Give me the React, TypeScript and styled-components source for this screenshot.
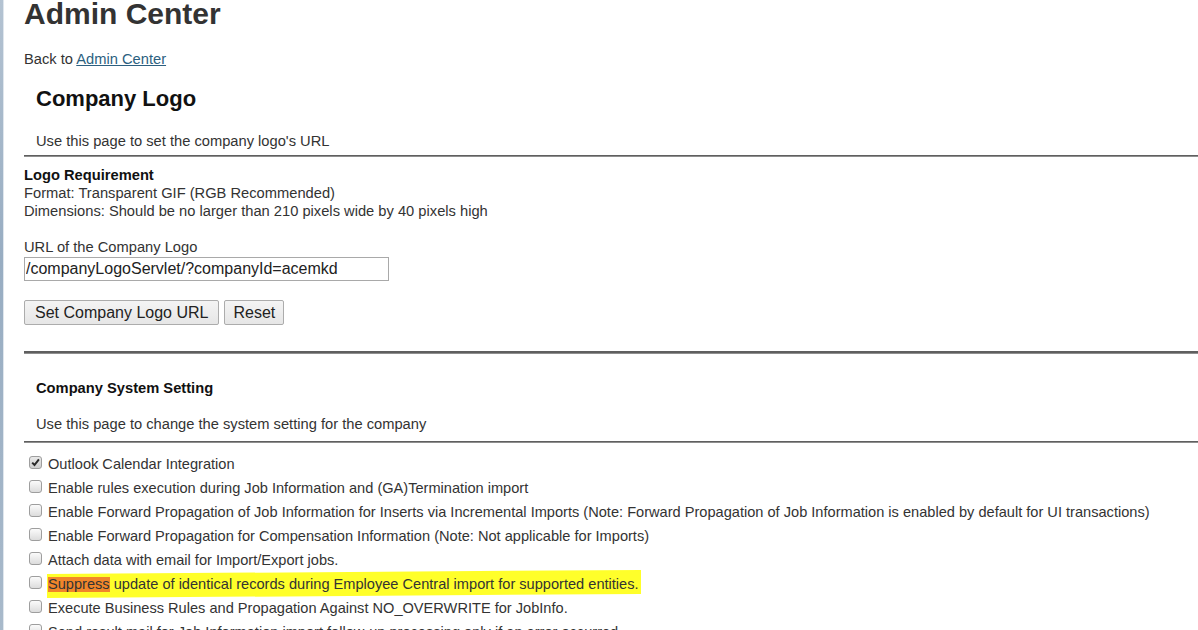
import React from 'react';
import styled, { createGlobalStyle } from 'styled-components';

const GlobalStyle = createGlobalStyle`
  html, body {
    margin: 0;
    padding: 0;
    overflow: hidden;
    background: #fff;
  }

  body {
    font-family: "Liberation Sans", Arial, sans-serif;
    font-size: 14.7px;
    color: #333;
  }
`;

const Page = styled.div`
  display: flex;
  min-height: 100vh;
`;

const SideStrip = styled.div`
  width: 3px;
  flex-shrink: 0;
  background: linear-gradient(180deg, #b4c3d2 0%, #98adc2 40%, #a9bacb 100%);
  border-right: 1px solid #dfe6ed;
`;

const Main = styled.main`
  flex: 1;
  padding-left: 20px;
  min-width: 0;
`;

const Title = styled.h1`
  margin: 0;
  font-size: 30px;
  line-height: 27px;
  font-weight: 700;
  color: #333;
`;

const BackLine = styled.p`
  margin: 23px 0 0;
  line-height: 18px;
`;

const BackLink = styled.a`
  color: #2c5f7f;
  text-decoration: underline;
  cursor: pointer;
`;

const SectionTitle = styled.h2`
  margin: 18px 0 0 12px;
  font-size: 22px;
  line-height: 26px;
  font-weight: 700;
  color: #111;
`;

const SubTitle = styled.h3`
  margin: 25px 0 0 12px;
  font-size: 14.7px;
  line-height: 18px;
  font-weight: 700;
  color: #111;
`;

const Intro = styled.p<{ $gap: number }>`
  margin: ${p => p.$gap}px 0 0 12px;
  line-height: 18px;
`;

const Divider = styled.hr<{ $gap: number; $thick?: boolean }>`
  margin: ${p => p.$gap}px 0 0;
  height: 0;
  border: none;
  border-top: ${p => (p.$thick ? 2 : 1)}px solid #5f5f5f;
  border-bottom: 1px solid #8e8e8e;
`;

const Requirements = styled.div`
  margin-top: 9px;
  line-height: 18px;
`;

const ReqHead = styled.div`
  font-weight: 700;
  color: #111;
`;

const FieldLabel = styled.label`
  display: block;
  margin-top: 18px;
  line-height: 18px;
`;

const UrlInput = styled.input`
  display: block;
  box-sizing: border-box;
  margin-top: 1px;
  width: 365px;
  height: 24px;
  padding: 0 1px;
  border: 1px solid #a9a9a9;
  font-family: "Liberation Sans", Arial, sans-serif;
  font-size: 16px;
  color: #222;
  outline: none;
`;

const ButtonRow = styled.div`
  display: flex;
  gap: 5px;
  margin-top: 19px;
`;

const Button = styled.button<{ $pad?: number }>`
  box-sizing: border-box;
  height: 25px;
  padding: 0 ${p => p.$pad ?? 10}px;
  border: 1px solid #acacac;
  border-radius: 2px;
  background: linear-gradient(180deg, #f4f4f4 0%, #e6e6e6 100%);
  font-family: "Liberation Sans", Arial, sans-serif;
  font-size: 16px;
  color: #222;
  cursor: pointer;
`;

const SettingList = styled.ul`
  list-style: none;
  margin: 9px 0 0;
  padding: 0;
  font-size: 14.6px;
`;

const SettingRow = styled.li`
  display: flex;
  align-items: center;
  height: 24px;
  line-height: 24px;
  padding-left: 5px;
  white-space: nowrap;
`;

const Box = styled.span<{ $checked?: boolean }>`
  box-sizing: border-box;
  flex-shrink: 0;
  width: 13px;
  height: 13px;
  margin: 0 6px 4px 0;
  border: 1px solid #9e9e9e;
  border-radius: 3px;
  background: ${p =>
    p.$checked
      ? 'linear-gradient(180deg, #e9e9e9 0%, #cfcfcf 100%)'
      : 'linear-gradient(180deg, #fbfbfb 0%, #dcdcdc 100%)'};
  display: flex;
  align-items: center;
  justify-content: center;

  svg {
    display: block;
  }
`;

const Marker = styled.span`
  position: relative;
  isolation: isolate;
  display: inline-block;
  line-height: 24px;
  margin-left: -1px;
  padding: 0 2px 0 1px;

  &::before {
    content: '';
    position: absolute;
    inset: 0;
    background: #ffff2a;
    transform: skewY(-0.4deg);
    z-index: -1;
  }
`;

const Emphasis = styled.span`
  display: inline-block;
  line-height: 15px;
  background: #f1862a;
`;

const settings = [
  { label: 'Outlook Calendar Integration', checked: true },
  { label: 'Enable rules execution during Job Information and (GA)Termination import' },
  {
    label:
      'Enable Forward Propagation of Job Information for Inserts via Incremental Imports (Note: Forward Propagation of Job Information is enabled by default for UI transactions)',
  },
  { label: 'Enable Forward Propagation for Compensation Information (Note: Not applicable for Imports)' },
  { label: 'Attach data with email for Import/Export jobs.' },
  { label: 'suppress', marked: true },
  { label: 'Execute Business Rules and Propagation Against NO_OVERWRITE for JobInfo.' },
  { label: 'Send result mail for Job Information import follow-up processing only if an error occurred' },
];

const Check = () => (
  <svg width="9" height="9" viewBox="0 0 9 9">
    <path d="M1.2 4.6 L3.5 7 L7.9 1.4" fill="none" stroke="#2a2a2a" strokeWidth="2" />
  </svg>
);

const App: React.FC = () => {
  return (
    <>
      <GlobalStyle />
      <Page>
        <SideStrip />
        <Main>
          <Title>Admin Center</Title>
          <BackLine>
            Back to <BackLink>Admin Center</BackLink>
          </BackLine>

          <SectionTitle>Company Logo</SectionTitle>
          <Intro $gap={20}>Use this page to set the company logo's URL</Intro>
          <Divider $gap={5} />

          <Requirements>
            <ReqHead>Logo Requirement</ReqHead>
            <div>Format: Transparent GIF (RGB Recommended)</div>
            <div>Dimensions: Should be no larger than 210 pixels wide by 40 pixels high</div>
          </Requirements>

          <FieldLabel htmlFor="logo-url">URL of the Company Logo</FieldLabel>
          <UrlInput id="logo-url" defaultValue="/companyLogoServlet/?companyId=acemkd" />

          <ButtonRow>
            <Button>Set Company Logo URL</Button>
            <Button $pad={8}>Reset</Button>
          </ButtonRow>

          <Divider $gap={26} $thick />

          <SubTitle>Company System Setting</SubTitle>
          <Intro $gap={18}>Use this page to change the system setting for the company</Intro>
          <Divider $gap={8} />

          <SettingList>
            {settings.map((s, i) => (
              <SettingRow key={i}>
                <Box $checked={s.checked}>{s.checked && <Check />}</Box>
                {s.marked ? (
                  <Marker>
                    <Emphasis>Suppress</Emphasis> update of identical records during Employee Central import for
                    supported entities.
                  </Marker>
                ) : (
                  <span>{s.label}</span>
                )}
              </SettingRow>
            ))}
          </SettingList>
        </Main>
      </Page>
    </>
  );
};

export default App;
